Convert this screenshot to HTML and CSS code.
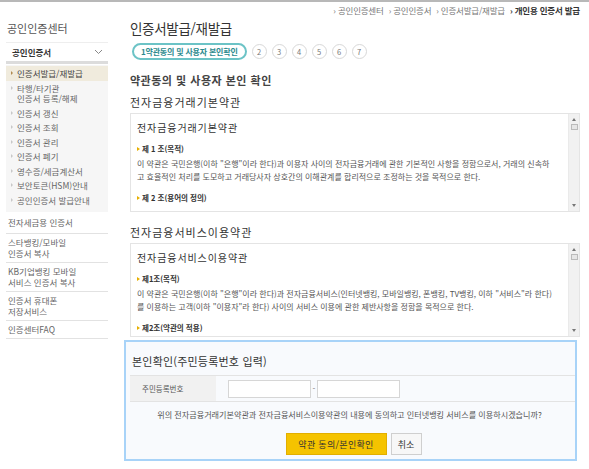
FILE: index.html
```html
<!DOCTYPE html>
<html lang="ko">
<head>
<meta charset="utf-8">
<link rel="stylesheet" href="styles.css">
</head>
<body>
<div class="topline"></div>
<div class="page">
  <aside class="side">
    <h1 class="side-title">공인인증센터</h1>
    <div class="side-box">
      <span>공인인증서</span>
      <svg class="chev" width="9" height="6" viewBox="0 0 9 6"><path d="M1 1 L4.5 4.5 L8 1" fill="none" stroke="#888" stroke-width="1"/></svg>
    </div>
    <ul class="sub">
      <li class="on">인증서발급/재발급</li>
      <li>타행/타기관<br>인증서 등록/해제</li>
      <li>인증서 갱신</li>
      <li>인증서 조회</li>
      <li>인증서 관리</li>
      <li>인증서 폐기</li>
      <li>영수증/세금계산서</li>
      <li>보안토큰(HSM)안내</li>
      <li>공인인증서 발급안내</li>
    </ul>
    <ul class="menu">
      <li class="first">전자세금용 인증서</li>
      <li>스타뱅킹/모바일<br>인증서 복사</li>
      <li>KB기업뱅킹 모바일<br>서비스 인증서 복사</li>
      <li>인증서 휴대폰<br>저장서비스</li>
      <li>인증센터FAQ</li>
    </ul>
  </aside>
  <main class="main">
    <div class="crumb">
      <span>› 공인인증센터</span><span>› 공인인증서</span><span>› 인증서발급/재발급</span><span class="cur">› 개인용 인증서 발급</span>
    </div>
    <h2 class="title">인증서발급/재발급</h2>
    <div class="steps">
      <span class="pill">1약관동의 및 사용자 본인확인</span>
      <span class="num">2</span><span class="num">3</span><span class="num">4</span><span class="num">5</span><span class="num">6</span><span class="num">7</span>
    </div>
    <h3 class="sec">약관동의 및 사용자 본인 확인</h3>
    <h4 class="sub-h">전자금융거래기본약관</h4>
    <div class="terms t1">
      <div class="terms-body">
        <div class="terms-h">전자금융거래기본약관</div>
        <div class="art">제 1 조(목적)</div>
        <p>이 약관은 국민은행(이하 "은행"이라 한다)과 이용자 사이의 전자금융거래에 관한 기본적인 사항을 정함으로서, 거래의 신속하<br>고 효율적인 처리를 도모하고 거래당사자 상호간의 이해관계를 합리적으로 조정하는 것을 목적으로 한다.</p>
        <div class="art">제 2 조(용어의 정의)</div>
      </div>
      <div class="sbar"><span class="up"></span><span class="thumb"></span><span class="down"></span></div>
    </div>
    <h4 class="sub-h second">전자금융서비스이용약관</h4>
    <div class="terms t2">
      <div class="terms-body">
        <div class="terms-h">전자금융서비스이용약관</div>
        <div class="art">제1조(목적)</div>
        <p>이 약관은 국민은행(이하 "은행"이라 한다)과 전자금융서비스(인터넷뱅킹, 모바일뱅킹, 폰뱅킹, TV뱅킹, 이하 "서비스"라 한다)<br>를 이용하는 고객(이하 "이용자"라 한다) 사이의 서비스 이용에 관한 제반사항을 정함을 목적으로 한다.</p>
        <div class="art">제2조(약관의 적용)</div>
      </div>
      <div class="sbar"><span class="up"></span><span class="thumb"></span><span class="down"></span></div>
    </div>
    <section class="panel">
      <h4 class="panel-h">본인확인(주민등록번호 입력)</h4>
      <div class="row">
        <div class="lab">주민등록번호</div>
        <div class="val"><span class="inp"></span><span class="dash">-</span><span class="inp"></span></div>
      </div>
      <p class="ask">위의 전자금융거래기본약관과 전자금융서비스이용약관의 내용에 동의하고 인터넷뱅킹 서비스를 이용하시겠습니까?</p>
      <div class="btns">
        <span class="btn yes">약관 동의/본인확인</span>
        <span class="btn no">취소</span>
      </div>
    </section>
  </main>
</div>
</body>
</html>
```

FILE: styles.css
```css
* { box-sizing: border-box; margin: 0; padding: 0; }
html, body { background: #fff; }
body {
  font-family: "Noto Sans CJK KR", "Noto Sans", sans-serif;
  color: #555;
  width: 589px;
  height: 469px;
  overflow: hidden;
}
.topline { height: 2px; background: #b8b8b8; }
.page { display: flex; }
.side { width: 102px; margin-left: 6px; flex: none; }
.side-title {
  font-size: 11px; font-weight: normal; color: #555;
  padding: 19px 0 0 1px; height: 40px; line-height: 14px;
}
.side-box {
  height: 22px; border-top: 1px solid #eee; border-bottom: 3px solid #dcdcdc;
  display: flex; align-items: center; justify-content: space-between;
  padding: 0 5px 0 6px; font-size: 8.5px; font-weight: bold; color: #333;
}
.chev { display: block; }
.sub { list-style: none; background: #f6f6f6; padding: 1px 0 5px; margin-top: 1px; }
.sub li {
  font-size: 8.5px; line-height: 10.5px; color: #666;
  padding: 2px 0 2px 11px; position: relative;
}
.sub li::before {
  content: ""; position: absolute; left: 5px; top: 5px;
  border-left: 2px solid #c8c8c8; border-top: 2px solid transparent; border-bottom: 2px solid transparent;
}
.sub li.on { background: #f0ebdd; color: #444; }
.sub li.on::before { border-left-color: #b08a50; }
.menu { list-style: none; }
.menu li {
  font-size: 8.5px; line-height: 11px; color: #666;
  padding: 3px 0 3px 2px; border-bottom: 1px solid #e2e2e2;
}
.menu li.first { padding: 5px 0 5px 2px; }
.main { width: 450px; margin-left: 22px; flex: none; }
.crumb {
  display: flex; justify-content: flex-end; gap: 5px;
  font-size: 8.5px; color: #777; padding-top: 2px; height: 17px; line-height: 12px;
  letter-spacing: -0.2px;
}
.crumb .cur { color: #333; font-weight: bold; }
.title {
  font-size: 13.5px; font-weight: normal; color: #333; letter-spacing: -0.3px;
  line-height: 18px; height: 23px; padding-top: 0;
}
.steps { display: flex; align-items: center; gap: 5px; height: 18px; padding-left: 2px; }
.pill {
  height: 17px; border: 2px solid #6cc3c6; border-radius: 9px;
  font-size: 8px; color: #2c8a8e; font-weight: bold; letter-spacing: -0.2px;
  padding: 0 7px; display: flex; align-items: center;
}
.num {
  width: 15px; height: 15px; border: 1px solid #d8d8d8; border-radius: 50%;
  font-size: 7.5px; color: #777; display: flex; align-items: center; justify-content: center;
}
.sec {
  font-size: 11px; font-weight: bold; color: #444; margin-top: 13px; line-height: 14px;
  letter-spacing: 0.5px;
}
.sub-h {
  font-size: 11px; font-weight: normal; color: #333; margin-top: 8px; line-height: 14px;
  letter-spacing: 1px;
}
.sub-h.second { margin-top: 13px; }
.terms {
  display: flex; border: 1px solid #e4e4e4; margin-top: 4px; overflow: hidden;
}
.t1 { height: 99px; }
.t2 { height: 94px; }
.second + .terms { margin-top: 4px; }
.terms-body { flex: 1; padding: 7px 6px 0 6px; overflow: hidden; }
.terms-h { font-size: 10px; color: #333; letter-spacing: 0.9px; line-height: 14px; height: 22px; }
.art {
  font-size: 7.5px; font-weight: bold; color: #333; line-height: 12px; padding-left: 5px; position: relative;
}
.art::before {
  content: ""; position: absolute; left: 0; top: 4px;
  border-left: 3px solid #e8b000; border-top: 2px solid transparent; border-bottom: 2px solid transparent;
}
.terms p {
  font-size: 8px; line-height: 13px; color: #555; margin: 1.5px 0 9.5px; white-space: nowrap;
}
.sbar {
  width: 11px; background: #f1f1f1; border-left: 1px solid #eaeaea;
  display: flex; flex-direction: column; align-items: center; padding: 4px 0;
}
.up { border-bottom: 3px solid #777; border-left: 2px solid transparent; border-right: 2px solid transparent; }
.down { border-top: 3px solid #777; border-left: 2px solid transparent; border-right: 2px solid transparent; margin-top: auto; }
.thumb { width: 7px; height: 6px; border: 1px solid #bbb; background: #e6e6e6; margin-top: 3px; }
.panel {
  margin: 3px 3px 0 -6px; height: 121px;
  border: 2px solid #a8d3f8; background: #f8fafd;
  padding: 0 0 0 4px;
}
.panel-h { font-size: 11px; font-weight: normal; color: #333; line-height: 14px; padding: 12px 0 0 2px; height: 33px; letter-spacing: 0.2px; }
.row { display: flex; height: 27px; border-top: 1px solid #e3e3e3; border-bottom: 1px solid #e3e3e3; }
.lab { width: 86px; background: #f1f1f1; font-size: 7.5px; color: #555; display: flex; align-items: center; padding-left: 12px; }
.val { display: flex; align-items: center; padding-left: 12px; }
.inp { width: 83px; height: 18px; border: 1px solid #d6d6d6; background: #fff; }
.dash { font-size: 8px; color: #777; width: 6px; text-align: center; }
.ask { font-size: 8.1px; color: #555; text-align: center; margin-top: 7px; line-height: 12px; padding-right: 6px; white-space: nowrap; }
.btns { display: flex; justify-content: center; gap: 4px; margin-top: 12px; padding-left: 2px; }
.btn { height: 22px; display: flex; align-items: center; justify-content: center; font-size: 9px; color: #333; }
.yes { width: 101px; background: #f5c300; border: 1px solid #e2ae00; letter-spacing: 0.3px; }
.no { width: 31px; background: #f7f7f7; border: 1px solid #cfcfcf; }
```
